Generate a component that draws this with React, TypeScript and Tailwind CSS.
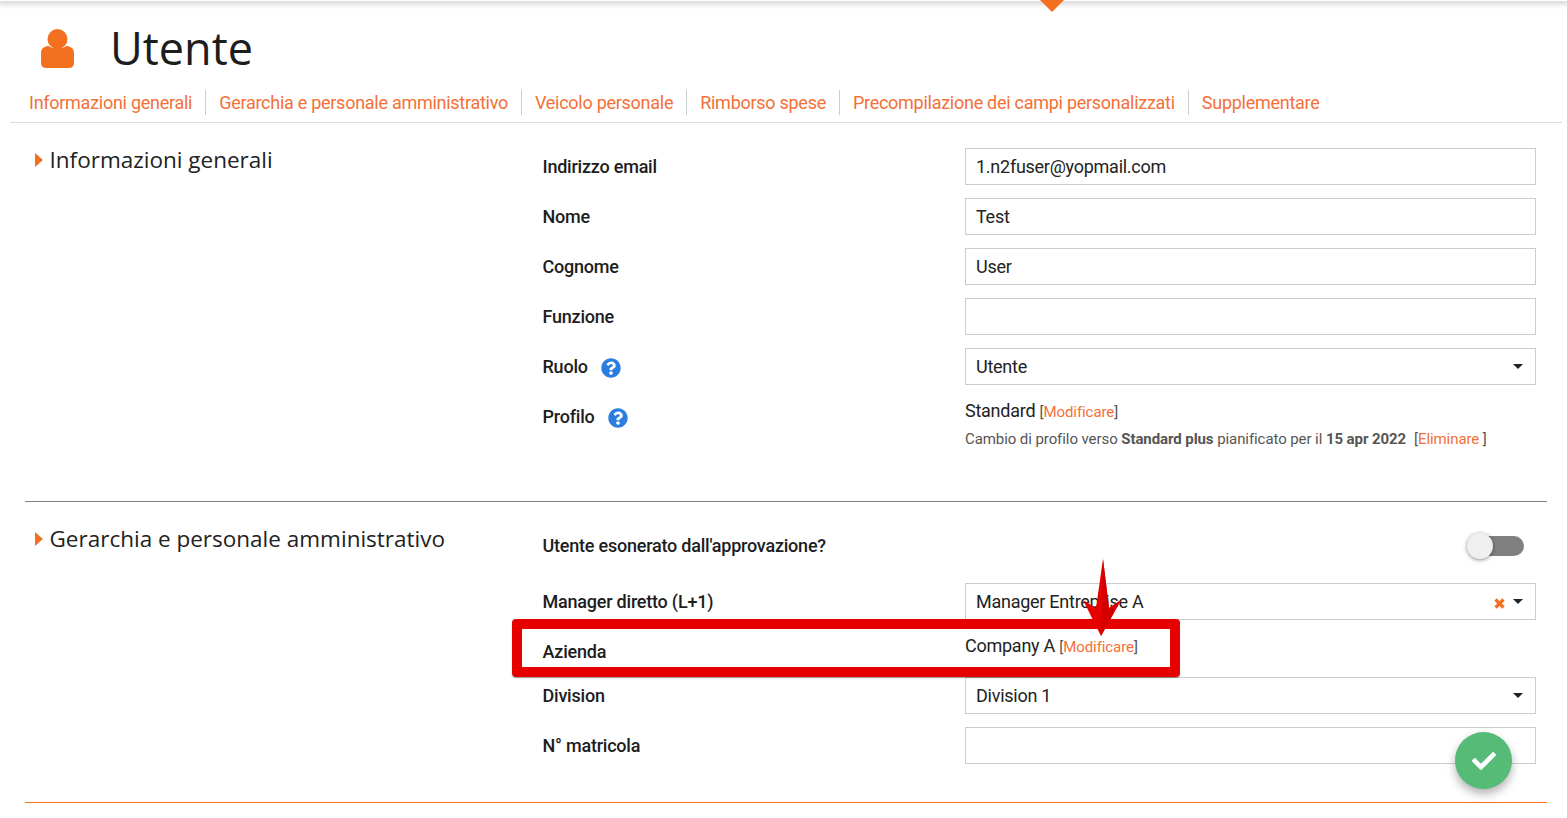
import React from "react";
import { FaCheck, FaQuestionCircle } from "react-icons/fa";

const roboto = "font-['Roboto',sans-serif]";
const openSans = "font-['Open_Sans',sans-serif]";

function Help() {
  return <FaQuestionCircle size={20} color="#2a7de1" className="ml-[13px] mt-[2px]" />;
}

function Caret() {
  return <span className="w-0 h-0 border-x-[5px] border-x-transparent border-t-[5px] border-t-[#222]" />;
}

function Field({ value, select, clear }: { value?: string; select?: boolean; clear?: boolean }) {
  return (
    <div className="w-[571px] h-[37px] border border-[#cccccc] flex items-center pl-[10px] pr-[12px] text-[18px] tracking-[-0.26px] text-[#222] bg-white">
      <span className="flex-1">{value}</span>
      {clear && (
        <svg width="11" height="11" viewBox="0 0 11 11" className="mr-[8px] mt-[3px]">
          <path d="M1.5 1.5 L9.5 9.5 M9.5 1.5 L1.5 9.5" stroke="#f37021" strokeWidth="3.2" />
        </svg>
      )}
      {select && <Caret />}
    </div>
  );
}

function Row({ label, help, children }: { label: string; help?: boolean; children?: React.ReactNode }) {
  return (
    <div className="flex h-[50px]">
      <div className="w-[422.5px] h-[37px] flex items-center font-medium text-[18px] tracking-[-0.22px] text-[#1d1d1d]">
        {label}
        {help && <Help />}
      </div>
      {children}
    </div>
  );
}

function Heading({ children, first }: { children: string; first?: boolean }) {
  return (
    <div className={`w-[517.5px] shrink-0 flex items-start pl-[10px] ${openSans} text-[22.5px] leading-[30px] text-[#222] ${first ? "-mt-[3px]" : "mt-[1px]"}`}>
      <span className="mt-[8px] mr-[6.5px] w-0 h-0 border-y-[7px] border-y-transparent border-l-[8px] border-l-[#f37021]" />
      {children}
    </div>
  );
}

const tabs = [
  "Informazioni generali",
  "Gerarchia e personale amministrativo",
  "Veicolo personale",
  "Rimborso spese",
  "Precompilazione dei campi personalizzati",
  "Supplementare",
];

export default function App() {
  return (
    <div className={`relative w-[1567px] h-[818px] overflow-hidden bg-white ${roboto}`}>
      {/* top edge */}
      <div className="absolute top-0 left-0 right-0 h-px shadow-[0_0_6px_2px_rgba(0,0,0,0.25)]" />
      <div className="absolute top-0 left-[1040px] w-0 h-0 border-x-[12px] border-x-transparent border-t-[12px] border-t-[#f37021]" />

      {/* header */}
      <div className="flex items-center h-[90px] pl-[41px] pt-[4px]">
        <svg width="33" height="39" viewBox="0 0 33 39" className="mt-[3px]">
          <circle cx="16.5" cy="10" r="10" fill="#f37021" />
          <path d="M0 33 V24 C0 19 4 17 8 17 C10 20 23 20 25 17 C29 17 33 19 33 24 V33 C33 36 32 39 28 39 H5 C1 39 0 36 0 33 Z" fill="#f37021" />
        </svg>
        <h1 className={`ml-[36px] ${openSans} text-[45px] leading-none text-[#1d1d1d]`}>Utente</h1>
      </div>

      {/* tabs */}
      <div className="mx-[10px] w-[1552px] h-[33px] border-b border-[#dddddd] pl-[6px] flex items-start">
        {tabs.map((t, i) => (
          <span
            key={t}
            className={
              "h-[25px] flex items-center text-[18px] text-[#f37038] px-[13px] tracking-[-0.27px] " +
              (i < tabs.length - 1 ? "border-r border-[#cccccc]" : "")
            }
          >
            {t}
          </span>
        ))}
      </div>

      {/* section 1 */}
      <div className="mx-[25px] w-[1522px] h-[379px] border-b border-[#8a7f76] flex pt-[25px]">
        <Heading first>Informazioni generali</Heading>
        <div>
          <Row label="Indirizzo email"><Field value="1.n2fuser@yopmail.com" /></Row>
          <Row label="Nome"><Field value="Test" /></Row>
          <Row label="Cognome"><Field value="User" /></Row>
          <Row label="Funzione"><Field /></Row>
          <Row label="Ruolo" help><Field value="Utente" select /></Row>
          <Row label="Profilo" help>
            <div>
              <div className="text-[18px] leading-[26px] text-[#222] tracking-[-0.25px]">
                Standard <span className="text-[15px] tracking-[-0.08px] text-[#555]">[<span className="text-[#f37038]">Modificare</span>]</span>
              </div>
              <div className="mt-[1px] text-[15px] leading-[26px] text-[#555] whitespace-nowrap tracking-[-0.08px]">
                Cambio di profilo verso <b className="font-bold">Standard plus</b> pianificato per il <b className="font-bold">15 apr 2022</b>
                <span className="ml-[8px]">[<span className="text-[#f37038]">Eliminare </span>]</span>
              </div>
            </div>
          </Row>
        </div>
      </div>

      {/* section 2 */}
      <div className="mx-[25px] w-[1522px] h-[301px] border-b border-[#f37021] flex pt-[21px]">
        <Heading>Gerarchia e personale amministrativo</Heading>
        <div>
          <div className="flex h-[60px] w-[993.5px] pt-[4px]">
            <div className="flex-1 h-[37px] flex items-center font-medium text-[18px] tracking-[-0.22px] text-[#1d1d1d]">Utente esonerato dall'approvazione?</div>
            <div className="relative w-[58px] h-[37px] mr-[11px] flex items-center">
              <div className="ml-[10px] w-[47px] h-[20px] rounded-full bg-[#808080]" />
              <div className="absolute left-0 top-[6px] w-[26px] h-[26px] rounded-full bg-[#efefef] shadow-[0_1px_4px_rgba(0,0,0,0.45)]" />
            </div>
          </div>
          <Row label="Manager diretto (L+1)"><Field value="Manager Entreprise A" select clear /></Row>
          <div className="flex h-[44px]">
            <div className="w-[422.5px] h-[37px] flex items-center font-medium text-[18px] tracking-[-0.22px] text-[#1d1d1d]">Azienda</div>
            <div className="text-[18px] leading-[26px] text-[#222] whitespace-nowrap tracking-[-0.25px]">
              Company A <span className="text-[15px] tracking-[-0.08px] text-[#555]">[<span className="text-[#f37038]">Modificare</span>]</span>
            </div>
          </div>
          <Row label="Division"><Field value="Division 1" select /></Row>
          <Row label="N° matricola"><Field /></Row>
        </div>
      </div>

      {/* annotation */}
      <div className="absolute left-[512px] top-[619px] w-[668px] h-[58px] border-[10px] border-[#e60000] rounded-[4px] shadow-[0_1px_1px_rgba(0,0,0,0.4)]" />
      <svg className="absolute left-[1080px] top-[558px]" width="44" height="80" viewBox="0 0 44 80">
        <path d="M23 1 L29 50 L41 42 L21 78 L3 42 L16 50 Z" fill="#e60000" />
        <path d="M23 1 L29 50 L41 42 L21 78 Z" fill="#d40000" />
      </svg>

      {/* save button */}
      <div className="absolute left-[1455px] top-[732px] w-[57px] h-[57px] rounded-full bg-[#55bb77] shadow-[0_5px_10px_rgba(0,0,0,0.3)] flex items-center justify-center">
        <FaCheck size={24} color="#fff" />
      </div>
    </div>
  );
}
